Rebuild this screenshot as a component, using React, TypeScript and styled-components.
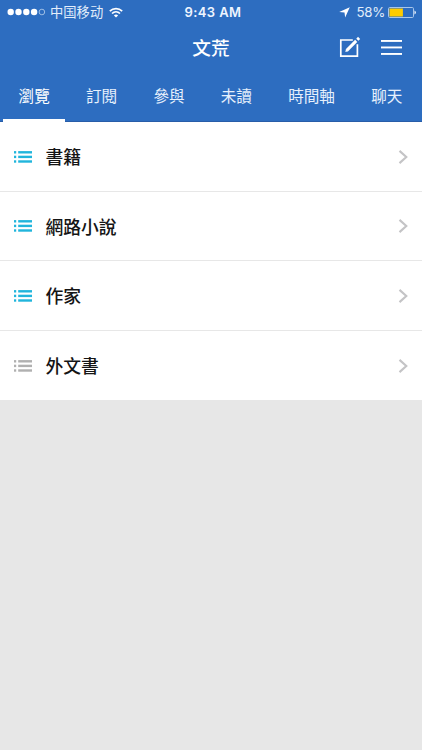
import React from "react";
import styled, { createGlobalStyle } from "styled-components";

const GlobalStyle = createGlobalStyle`
  html, body { margin: 0; padding: 0; background: #e7e7e7; overflow: hidden; }
  *, *::before, *::after { box-sizing: border-box; }
`;

const Screen = styled.div`
  width: 422px;
  height: 750px;
  display: flex;
  flex-direction: column;
  background: #e7e7e7;
  font-family: "Noto Sans CJK TC", "Noto Sans", sans-serif;
`;

const Header = styled.header`
  height: 122px;
  flex: none;
  display: flex;
  flex-direction: column;
  background: #2d6dc0;
  box-shadow: inset 0 -1px #285da8;
  color: #fff;
`;

const StatusBar = styled.div`
  height: 24px;
  flex: none;
  display: grid;
  grid-template-columns: 1fr auto 1fr;
  align-items: center;
  padding: 0 6px 0 7px;
`;

const StatusGroup = styled.div<{ $end?: boolean }>`
  display: flex;
  align-items: center;
  justify-content: ${(p) => (p.$end ? "flex-end" : "flex-start")};
`;

const Carrier = styled.span`
  font-family: "Noto Sans CJK SC", sans-serif;
  font-size: 13.3px;
  line-height: 24px;
  margin: 0 6px 0 4px;
  color: #e2eefb;
`;

const Clock = styled.span`
  font-family: Inter, sans-serif;
  font-size: 13px;
  font-weight: 600;
  letter-spacing: 0.4px;
  line-height: 24px;
  margin-left: 3px;
  color: #eef5ff;
`;

const Percent = styled.span`
  font-family: Inter, sans-serif;
  font-size: 13.3px;
  letter-spacing: -0.25px;
  line-height: 24px;
  margin: 0 3px 0 6px;
  color: #e2eefb;
`;

const TitleBar = styled.div`
  height: 46px;
  flex: none;
  display: grid;
  grid-template-columns: 1fr auto 1fr;
  align-items: center;
`;

const Title = styled.h1`
  grid-column: 2;
  margin: 0;
  font-size: 18.7px;
  font-weight: 500;
  line-height: 46px;
`;

const Actions = styled.div`
  display: flex;
  justify-content: flex-end;
  align-items: center;
  gap: 20px;
  padding-right: 20px;
`;

const IconButton = styled.button`
  padding: 0;
  border: 0;
  background: none;
  display: flex;
`;

const Tabs = styled.nav`
  flex: 1;
  display: flex;
  gap: 5px;
  padding-left: 3px;
`;

const Tab = styled.a<{ $active?: boolean }>`
  flex: none;
  padding: 0 15.6px;
  font-size: 15.6px;
  line-height: 51px;
  color: ${(p) => (p.$active ? "#fff" : "#e6f0fc")};
  box-shadow: ${(p) => (p.$active ? "inset 0 -3px #fff" : "none")};
`;

const List = styled.ul`
  flex: none;
  margin: 0;
  padding: 0;
  list-style: none;
  background: #fff;
`;

const Row = styled.li`
  display: flex;
  align-items: center;
  height: 69.6px;
  padding: 0 14px;
  &:not(:last-child) { box-shadow: inset 0 -1px #e7e7e7; }
`;

const RowLabel = styled.span`
  flex: 1;
  margin-left: 13.5px;
  font-size: 17.8px;
  font-weight: 500;
  line-height: 24px;
  padding-bottom: 1.6px;
  color: #151515;
`;

const SignalIcon = () => (
  <svg width="39" height="8" viewBox="0 0 39 8" fill="#fff">
    {[3.7, 11.5, 19.3, 27.1].map((x) => (
      <circle key={x} cx={x} cy="4" r="3.2" />
    ))}
    <circle cx="34.9" cy="4" r="2.8" fill="none" stroke="#b9d0ec" strokeWidth=".8" />
  </svg>
);

const WifiIcon = () => (
  <svg width="14" height="11" viewBox="0 0 14 11" fill="none" stroke="#fff" strokeWidth="1.7">
    <path d="M0.8 4.1C4.4.7 9.6.7 13.2 4.1" />
    <path d="M3 6.5C5.3 4.3 8.7 4.3 11 6.5" />
    <path d="M7 10.6 4.9 8.4C6.1 7.3 7.9 7.3 9.1 8.4Z" fill="#fff" stroke="none" />
  </svg>
);

const LocationIcon = () => (
  <svg width="11" height="11" viewBox="0 0 10 10">
    <path d="M9.8.2 5.6 9.6 5 5 .2 4.5Z" fill="#fff" />
  </svg>
);

const BatteryIcon = () => (
  <svg width="28" height="11" viewBox="0 0 28 11">
    <rect x=".5" y=".5" width="25" height="10" rx="1.2" fill="none" stroke="#a9c6eb" />
    <rect x="1.5" y="1.5" width="13.4" height="8" fill="#ffcc00" />
    <path d="M26.5 3.6Q27.8 4 27.8 5.5T26.5 7.4Z" fill="#fff" />
  </svg>
);

const ComposeIcon = () => (
  <svg width="22" height="22" viewBox="0 0 22 22" fill="none" stroke="#fff">
    <path d="M13.8 4H1.8V20.2H18.4V8.3" strokeWidth="1.7" />
    <path d="M7.8 14.4 17.2 4.9" strokeWidth="3" />
    <path d="M6.3 15.9 7 13 9.2 15.2Z" fill="#fff" stroke="none" />
    <path d="M18.3 3.7 20.1 1.9" strokeWidth="3" />
  </svg>
);

const MenuIcon = () => (
  <svg width="21" height="15" viewBox="0 0 21 15" fill="#fff">
    <rect y="0" width="21" height="1.9" />
    <rect y="6.5" width="21" height="1.9" />
    <rect y="13" width="21" height="1.9" />
  </svg>
);

const ListIcon = ({ color }: { color: string }) => (
  <svg width="18" height="12" viewBox="0 0 18 12" fill={color}>
    {[0.1, 4.7, 9.3].map((y) => (
      <React.Fragment key={y}>
        <rect y={y} width="2.2" height="2.4" />
        <rect x="4.2" y={y} width="13.8" height="2.4" />
      </React.Fragment>
    ))}
  </svg>
);

const Chevron = () => (
  <svg width="10" height="14" viewBox="0 0 10 14" fill="none" stroke="#c4c4c6" strokeWidth="2.1">
    <path d="M1.5 .9 8.3 7 1.5 13.1" />
  </svg>
);

const tabs = ["瀏覽", "訂閱", "參與", "未讀", "時間軸", "聊天"];

const categories = [
  { label: "書籍", color: "#21b5dc" },
  { label: "網路小說", color: "#21b5dc" },
  { label: "作家", color: "#21b5dc" },
  { label: "外文書", color: "#b0b0b0" },
];

export default function App() {
  return (
    <Screen>
      <GlobalStyle />
      <Header>
        <StatusBar>
          <StatusGroup>
            <SignalIcon />
            <Carrier>中国移动</Carrier>
            <WifiIcon />
          </StatusGroup>
          <Clock>9:43 AM</Clock>
          <StatusGroup $end>
            <LocationIcon />
            <Percent>58%</Percent>
            <BatteryIcon />
          </StatusGroup>
        </StatusBar>
        <TitleBar>
          <Title>文荒</Title>
          <Actions>
            <IconButton aria-label="compose"><ComposeIcon /></IconButton>
            <IconButton aria-label="menu"><MenuIcon /></IconButton>
          </Actions>
        </TitleBar>
        <Tabs>
          {tabs.map((name, i) => (
            <Tab key={name} $active={i === 0}>{name}</Tab>
          ))}
        </Tabs>
      </Header>
      <List>
        {categories.map(({ label, color }) => (
          <Row key={label}>
            <ListIcon color={color} />
            <RowLabel>{label}</RowLabel>
            <Chevron />
          </Row>
        ))}
      </List>
    </Screen>
  );
}
